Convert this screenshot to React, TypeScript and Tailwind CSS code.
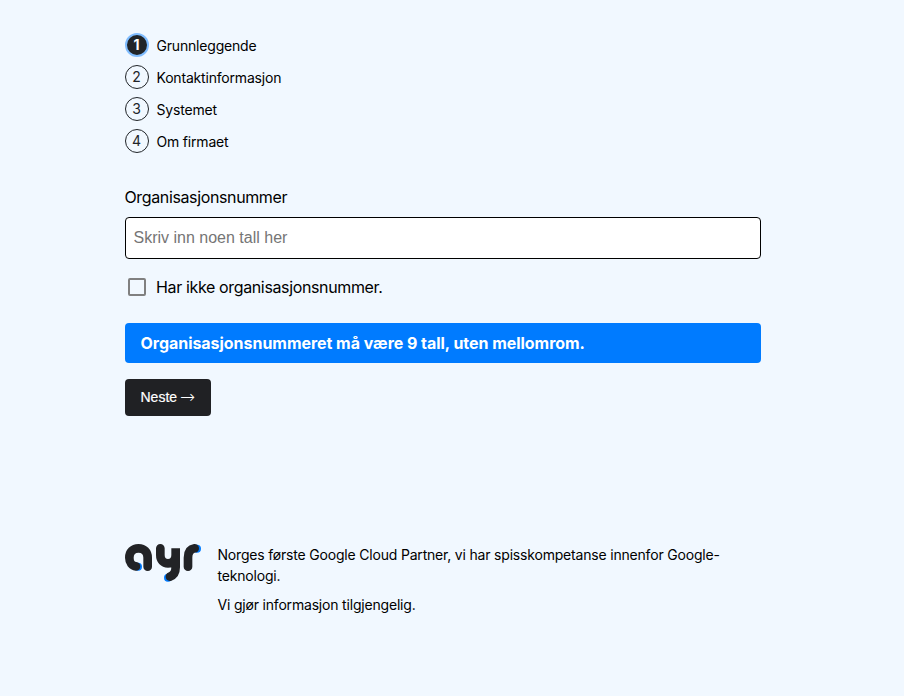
const steps = ["Grunnleggende", "Kontaktinformasjon", "Systemet", "Om firmaet"];

function Logo() {
  return (
    <svg className="mt-1.5 h-[40px] w-[77px] shrink-0" viewBox="21 18 231 120" fill="none" strokeLinecap="round" aria-label="ayr">
      <g stroke="#007bff" strokeWidth="24">
        <path d="M60 89h0M150 122h0M237 35h0" />
      </g>
      <g stroke="#222326" strokeWidth="26">
        <path d="M54 88C42 87 34 76 34 62C34 45 45 34 61.500 34C78 34 89 45 89 62V89" />
        <path d="M127 34V54C127 69 136 79 150 79C164 79 173 69 173 54V34V91C173 106 167 115 156 119" />
        <path d="M210 89V62C210 45 217 36 230 34" />
      </g>
    </svg>
  );
}

export default function App() {
  return (
    <div className="min-h-screen bg-[#f1f8ff] pt-[33px] pl-[125px] font-['Inter',sans-serif] text-black">
      <main className="w-[636px]">
        <ol className="flex flex-col gap-2">
          {steps.map((step, i) => (
            <li key={step} className="flex h-6 items-center gap-[7.5px] text-sm">
              <span
                className={
                  i === 0
                    ? "flex size-6 items-center justify-center rounded-full border-2 border-[#80bdff] bg-[#212529] pr-px text-sm font-bold text-white"
                    : "flex size-6 items-center justify-center rounded-full border border-[#212529] pr-px text-sm text-[#212529]"
                }
              >
                {i + 1}
              </span>
              <span className="pt-0.5 tracking-[-0.19px]">{step}</span>
            </li>
          ))}
        </ol>
        <label className="mt-8 block text-base leading-6">
          <span className="-ml-[0.5px] tracking-[-0.37px]">Organisasjonsnummer</span>
          <input
            className="mt-2 block h-[42px] w-full rounded border border-black bg-white px-[7.5px] font-['Liberation_Sans',sans-serif] text-base placeholder:text-[#757575]"
            placeholder="Skriv inn noen tall her"
          />
        </label>
        <label className="mt-4 flex h-6 items-center text-base tracking-[-0.36px]">
          <input type="checkbox" className="mr-2.5 ml-[3px] size-[18px] appearance-none rounded-[2px] border-2 border-[#808080]" />
          Har ikke organisasjonsnummer.
        </label>
        <div className="mt-6 flex h-10 items-center rounded bg-[#007bff] pl-[15.5px] text-base font-bold tracking-[-0.035px] text-white">
          Organisasjonsnummeret må være 9 tall, uten mellomrom.
        </div>
        <button className="mt-4 flex h-[37px] w-[86px] items-center gap-[3px] rounded bg-[#202124] pb-0.5 pl-[15.5px] font-['Liberation_Sans',sans-serif] text-sm text-white">
          <span className="[-webkit-text-stroke:0.2px_white]">Neste</span>
          <span className="font-['DejaVu_Sans',sans-serif] text-[18px] leading-none font-extralight">→</span>
        </button>
        <footer className="mt-[121px] flex gap-[15.5px]">
          <Logo />
          <div className="flex flex-col gap-2 pt-[7px] text-sm leading-[21px] tracking-[-0.19px]">
            <p>Norges første Google Cloud Partner, vi har spisskompetanse innenfor Google-teknologi.</p>
            <p>Vi gjør informasjon tilgjengelig.</p>
          </div>
        </footer>
      </main>
    </div>
  );
}
